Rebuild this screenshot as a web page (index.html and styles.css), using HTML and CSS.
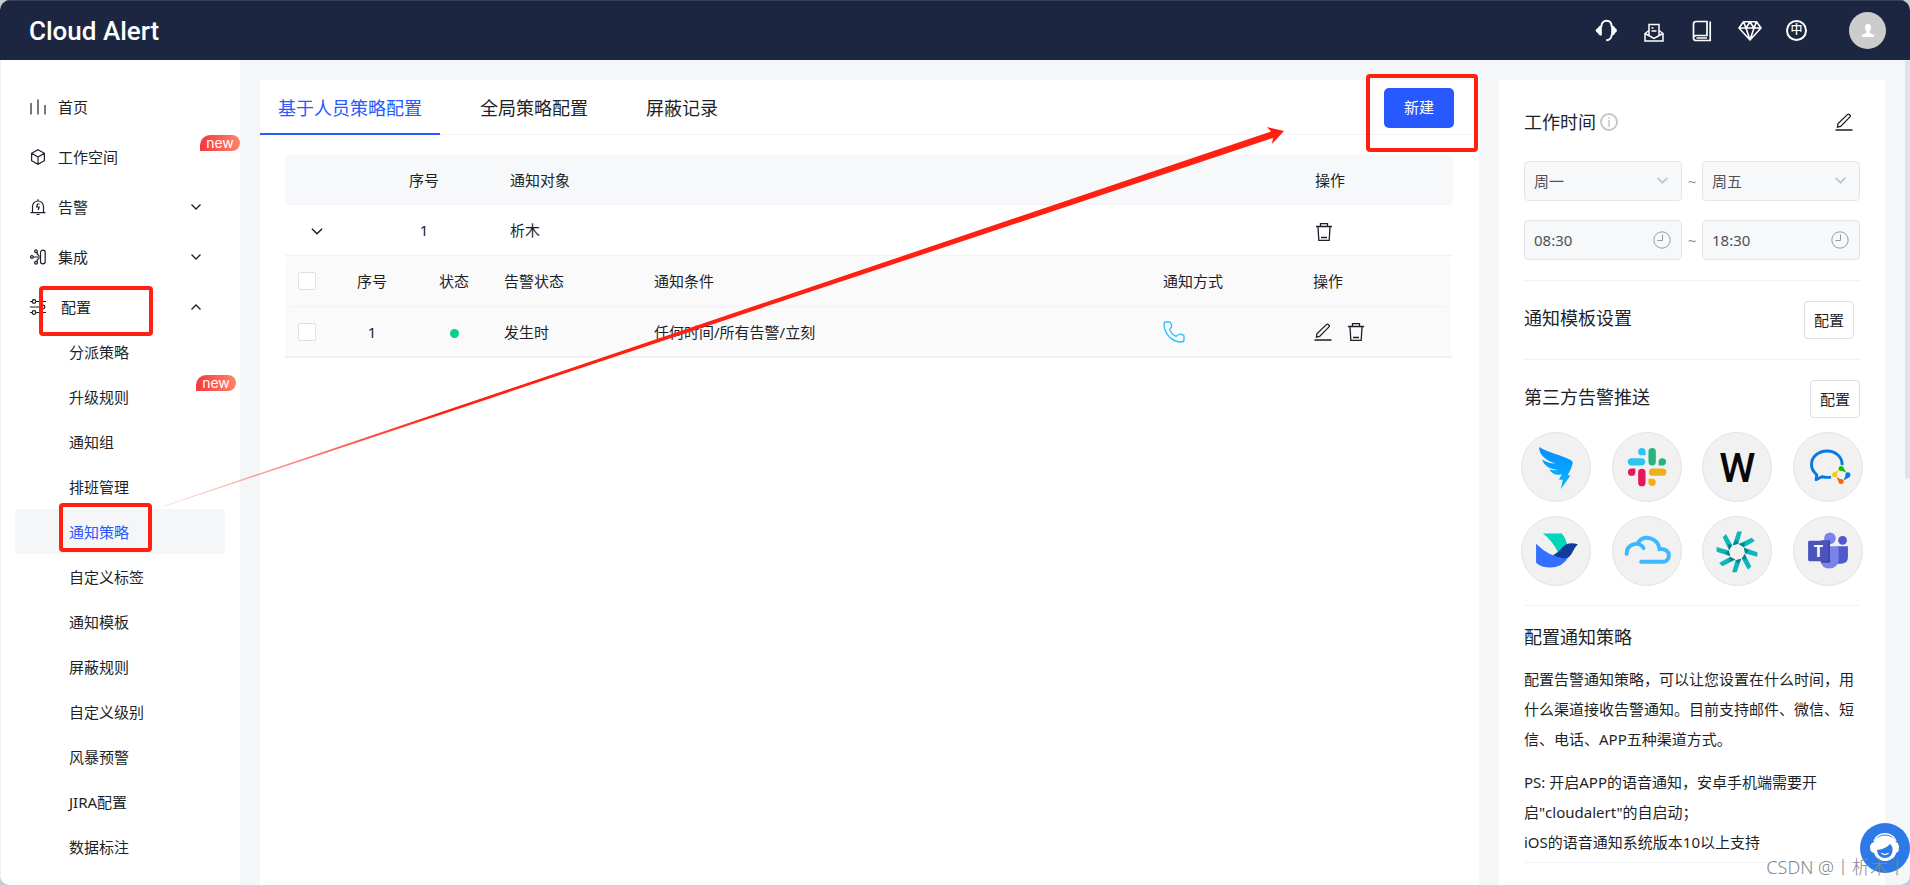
FILE: index.html
```html
<!DOCTYPE html>
<html lang="zh-CN">
<head>
<meta charset="utf-8">
<title>Cloud Alert</title>
<link rel="stylesheet" href="styles.css">
</head>
<body>
<svg width="0" height="0" class="defs" aria-hidden="true">
  <symbol id="trash" viewBox="0 0 18 20"><path d="M1 4.500h16M5.500 4V1.700h7V4M3 5l.8 13.300h10.400L15 5M6 15.500h6" /></symbol>
  <symbol id="edit" viewBox="0 0 18 18"><path d="M2.500 14.200l.4-3.400 9.700-9.400q.8-.7 1.600.1l.8.8q.8.8 0 1.600L5.600 13.400zM.5 17h17" /></symbol>
  <symbol id="down" viewBox="0 0 12 8"><path d="M1.500 1.500L6 6l4.500-4.500" /></symbol>
  <symbol id="clock" viewBox="0 0 18 18"><circle cx="9" cy="9" r="8.200" /><path d="M9.500 3.500V9.500H4.500" /></symbol>
</svg>
<div class="app">
  <header class="topbar">
    <h1 class="logo">Cloud Alert</h1>
    <nav class="tools" aria-label="工具">
      <a href="#" aria-label="客服"><svg viewBox="0 0 24 24"><path d="M7.300 8C7.300 4 9.500 1.800 12.500 1.800S17.700 4 17.700 8M17.700 15.500q-.2 5.500-5.500 5.800" fill="none" stroke="#fff" stroke-width="1.900"/><path d="M7.800 6.500v10C4.500 16.500 4 14.500 4 14 1 13 1 10 4 9 4.300 7.500 5.500 6.500 7.800 6.500zM17.200 6.500v10c2.800 0 3.800-1.500 3.800-2.500 2.500-1 2.500-4 0-5-.3-1.500-1.500-2.500-3.800-2.500z" fill="#fff"/></svg></a>
      <a href="#" aria-label="消息"><svg viewBox="0 0 24 24" fill="none" stroke="#fff" stroke-width="1.500"><path d="M7 16V5.500h10V16M7 11.500l-4 3v7.500h18v-7.500l-4-3M3 14.500l9 5 9-5M9.500 9h2M9.500 12h5"/></svg></a>
      <a href="#" aria-label="文档"><svg viewBox="0 0 24 24" fill="none" stroke="#fff" stroke-width="1.700"><path d="M3.500 18.500V5q0-2.500 2.500-2.500h11v14H6q-2.500 0-2.500 2.500t2.500 2.500h14.200V2.500M6.500 19H17"/></svg></a>
      <a href="#" aria-label="版本"><svg viewBox="0 0 24 24" fill="none" stroke="#fff" stroke-width="1.600" stroke-linejoin="round"><path d="M5.500 2.800h13L23 9 12 21 1 9zM1 9h22M5.500 2.800L8 9l4 12 4-12 2.500-6.200M8 9l4-6 4 6"/></svg></a>
      <a href="#" class="lang" aria-label="语言">中</a>
      <button class="avatar" aria-label="账户"><svg viewBox="0 0 14 14" fill="#fff"><path d="M7 0c2 0 3 1.500 3 3.500 0 1.700-.7 3-1.500 3.800v1.500L13 11v2H1v-2l4.500-2.200V7.300C4.700 6.500 4 5.200 4 3.500 4 1.500 5 0 7 0z"/></svg></button>
    </nav>
  </header>
  <div class="body">
    <aside class="side">
      <ul class="menu">
        <li><a href="#"><svg viewBox="0 0 16 16"><path d="M1 4v11.500M8 .5v15M15 6v9.500"/></svg>首页</a></li>
        <li><a href="#"><svg viewBox="0 0 16 16"><path d="M8 .8l6.400 3.500v7.400L8 15.200l-6.400-3.500V4.300zM1.600 4.300L8 8l6.400-3.700M8 8v7"/></svg>工作空间</a><span class="new">new</span></li>
        <li><a href="#"><svg viewBox="0 0 16 16"><path d="M2.500 13.500V7.500a5.500 5.500 0 0 1 11 0v6M.5 13.600h15M6.500 15.500h3M8 .2v2M9.500 5h-2L6.600 8h2.600l-1 3"/></svg>告警<svg class="chev" viewBox="0 0 12 8"><use href="#down"/></svg></a></li>
        <li><a href="#"><svg viewBox="0 0 16 16"><rect x="10.500" y="1.200" width="4.700" height="13.600" rx="2.300"/><circle cx="1.900" cy="8" r="1.400"/><circle cx="6" cy="2.300" r="1.400"/><circle cx="6" cy="13.700" r="1.400"/><path d="M3.300 8h7M7.200 3.200v2l2 1.500M7.200 12.800v-2l2-1.500"/></svg>集成<svg class="chev" viewBox="0 0 12 8"><use href="#down"/></svg></a></li>
        <li><a href="#" class="wide"><svg viewBox="0 0 16 16"><circle cx="4" cy="2.500" r="1.800"/><circle cx="13" cy="8" r="1.800"/><circle cx="4" cy="13.500" r="1.800"/><path d="M0 2.500h2M6 2.500h10M0 8h11M0 13.500h2M6 13.500h10"/></svg>配置<svg class="chev up" viewBox="0 0 12 8"><use href="#down"/></svg></a>
          <ul class="sub">
            <li><a href="#">分派策略</a></li>
            <li><a href="#">升级规则</a><span class="new">new</span></li>
            <li><a href="#">通知组</a></li>
            <li><a href="#">排班管理</a></li>
            <li><a href="#" class="current">通知策略</a></li>
            <li><a href="#">自定义标签</a></li>
            <li><a href="#">通知模板</a></li>
            <li><a href="#">屏蔽规则</a></li>
            <li><a href="#">自定义级别</a></li>
            <li><a href="#">风暴预警</a></li>
            <li><a href="#">JIRA配置</a></li>
            <li><a href="#">数据标注</a></li>
          </ul>
        </li>
      </ul>
    </aside>
    <main class="panel">
      <div class="tabs">
        <a href="#" class="tab on">基于人员策略配置</a>
        <a href="#" class="tab">全局策略配置</a>
        <a href="#" class="tab">屏蔽记录</a>
        <button class="create">新建</button>
      </div>
      <table class="grid">
        <colgroup><col class="c-open"><col class="c-num"><col><col class="c-act"></colgroup>
        <thead><tr><th></th><th class="mid">序号</th><th>通知对象</th><th>操作</th></tr></thead>
        <tbody>
          <tr><td class="mid"><button class="icon" aria-label="收起"><svg class="fold" viewBox="0 0 12 8"><use href="#down"/></svg></button></td><td class="mid">1</td><td>析木</td><td><button class="icon" aria-label="删除"><svg class="i-trash"><use href="#trash"/></svg></button></td></tr>
          <tr><td colspan="4" class="nest">
            <table class="grid inner">
              <colgroup><col class="n-check"><col class="n-num"><col class="n-state"><col class="n-alert"><col><col class="n-way"><col class="c-act"></colgroup>
              <thead><tr><th class="mid"><input type="checkbox" aria-label="全选"></th><th class="mid">序号</th><th class="mid">状态</th><th>告警状态</th><th>通知条件</th><th>通知方式</th><th>操作</th></tr></thead>
              <tbody><tr><td class="mid"><input type="checkbox" aria-label="选择 1"></td><td class="mid">1</td><td class="mid"><span class="dot"></span></td><td>发生时</td><td>任何时间/所有告警/立刻</td><td><svg class="phone" viewBox="0 0 22 22"><path d="M1 2.500Q1 1 3 1h3q1.500 0 2 1.500l.6 2.200Q9 6 7.700 6.800 6.500 8 7 9.500q1.500 3.500 5 5.300 1.500.6 2.500-.4 1.200-1.500 3-1.200l2 .5Q21 14 21 15.500v3q0 2.500-2.500 2.500C9 21 1 13 1 2.500z"/></svg></td><td><div class="acts"><button class="icon" aria-label="编辑"><svg class="i-edit"><use href="#edit"/></svg></button><button class="icon" aria-label="删除"><svg class="i-trash"><use href="#trash"/></svg></button></div></td></tr></tbody>
            </table>
          </td></tr>
        </tbody>
      </table>
    </main>
    <aside class="info">
      <section class="hours">
        <div class="head"><h2>工作时间</h2><span class="tip">i</span><button class="icon edit" aria-label="编辑工作时间"><svg class="i-edit"><use href="#edit"/></svg></button></div>
        <div class="range">
          <div class="field"><select aria-label="开始日"><option>周一</option></select><svg class="arrow" viewBox="0 0 12 8"><use href="#down"/></svg></div>
          <span>~</span>
          <div class="field"><select aria-label="结束日"><option>周五</option></select><svg class="arrow" viewBox="0 0 12 8"><use href="#down"/></svg></div>
        </div>
        <div class="range">
          <div class="field"><input type="text" value="08:30" aria-label="开始时间"><svg class="clock"><use href="#clock"/></svg></div>
          <span>~</span>
          <div class="field"><input type="text" value="18:30" aria-label="结束时间"><svg class="clock"><use href="#clock"/></svg></div>
        </div>
      </section>
      <section class="line template"><h2>通知模板设置</h2><button class="set">配置</button></section>
      <section class="push">
        <div class="line"><h2>第三方告警推送</h2><button class="set">配置</button></div>
        <div class="brands">
          <span><svg viewBox="0 0 70 70"><defs><linearGradient id="ding" x1="0" y1="0" x2="0" y2="1"><stop offset="0" stop-color="#078cff"/><stop offset="1" stop-color="#08b8ff"/></linearGradient></defs><path fill="url(#ding)" d="M17.500 14.500c10 6 22 8 32 13 3 1.500 3.200 3 2 6-1 4-3 7-4.500 10h3L40 58l2-10h-4l3-5.500c-6 1.500-9 0-13-5 4 1 6.500 1 9 .5-9-1-14-4-16.500-11 5 3.500 9 4 14 4.500C24 28 18 23 17.500 14.500z"/></svg></span>
          <span><svg viewBox="0 0 70 70" fill="none" stroke-width="7.600" stroke-linecap="round"><path stroke="#24b47e" d="M40.300 19.300v10.400"/><path stroke="#ecb216" d="M40.700 40.300h10.400"/><path stroke="#e3175a" d="M29.700 40.700v10.400"/><path stroke="#2bc4f3" d="M19 29.700h10.400"/><g stroke="none"><path fill="#24b47e" d="M47 33.500v-3.800a3.800 3.800 0 1 1 3.800 3.800z"/><path fill="#ecb216" d="M36.500 47h3.800a3.800 3.800 0 1 1-3.800 3.800z"/><path fill="#e3175a" d="M23 36.500v3.800a3.800 3.800 0 1 1-3.800-3.800z"/><path fill="#2bc4f3" d="M33.500 23h-3.800a3.800 3.800 0 1 1 3.800-3.800z"/></g></svg></span>
          <span class="w">W</span>
          <span><svg viewBox="0 0 70 70"><path fill="none" stroke="#0a78e4" stroke-width="3" stroke-linejoin="round" d="M49.500 33C50 24 42 18.500 34 18.500c-9 0-16 6-16 14 0 5 2.500 8 5.500 10.500L22.700 48l6-3q5 1.200 9.500.4"/><path fill="#24b80b" d="M45.800 37.500L54 41l-3.500-6z"/><path fill="#0a78e4" d="M54.500 40.500L51 49l6-3.500z"/><path fill="#ff6010" d="M51 49.500L43.500 45l3 6z"/><path fill="#ffc60b" d="M42 45.500L46.500 38l-6 3z"/><circle cx="48.500" cy="36.500" r="2.600" fill="#24b80b"/><circle cx="55.500" cy="43" r="2.600" fill="#0a78e4"/><circle cx="48.500" cy="50" r="2.600" fill="#ff6010"/><circle cx="41.800" cy="43" r="2.600" fill="#ffc60b"/></svg></span>
          <span><svg viewBox="0 0 70 70"><path fill="#00d6b9" d="M21.500 17H41q4 4.500 5.500 11l-9 9Q31 24 21.500 17z"/><path fill="#3370ff" d="M14.500 27.500Q28 41 43 42q3 0 5-1Q42 52 29.500 52 20 52 14.500 47z"/><path fill="#133c9a" d="M32 39.500Q37 37 42 31t15.500-3q-4 4-6 9c-4 8-12 6-19.500 2.500z"/></svg></span>
          <span><svg viewBox="0 0 70 70" fill="none" stroke="#3db8ff" stroke-width="4" stroke-linecap="round"><path d="M14 38c0-11 13-13.500 17.500-6"/><path d="M26 26c6-8 20-5 22 7 13-1 11 13 4 13H29"/></svg></span>
          <span><svg viewBox="0 0 70 70"><defs><g id="ray"><path fill="#0cb6bb" d="M35.300 15h4.700L36.500 27.500 30.500 29z"/><path fill="#087f85" d="M30.500 29l3.500-5.500 2.500 4z"/></g></defs><use href="#ray"/><use href="#ray" transform="rotate(45 35 36)"/><use href="#ray" transform="rotate(90 35 36)"/><use href="#ray" transform="rotate(135 35 36)"/><use href="#ray" transform="rotate(180 35 36)"/><use href="#ray" transform="rotate(225 35 36)"/><use href="#ray" transform="rotate(270 35 36)"/><use href="#ray" transform="rotate(315 35 36)"/></svg></span>
          <span><svg viewBox="0 0 70 70"><circle cx="50" cy="24" r="4.500" fill="#5059c9"/><path fill="#5059c9" d="M44 30h11.500v11q0 7-6.500 7h-5z"/><circle cx="37" cy="22" r="6" fill="#7b83eb"/><path fill="#7b83eb" d="M27 30h19v14q-1 9-10 9-7 0-9-8z"/><path fill="#3a429f" d="M28 24h9v23H28z"/><rect x="14.500" y="24.500" width="21" height="21" rx="1.500" fill="#4b53bc"/></svg><b>T</b></span>
        </div>
      </section>
      <section class="help">
        <h2>配置通知策略</h2>
        <p>配置告警通知策略，可以让您设置在什么时间，用什么渠道接收告警通知。目前支持邮件、微信、短信、电话、APP五种渠道方式。</p>
        <p>PS: 开启APP的语音通知，安卓手机端需要开启"cloudalert"的自启动；<br>iOS的语音通知系统版本10以上支持</p>
      </section>
    </aside>
  </div>
  <div class="thumb"></div>
  <button class="service" aria-label="在线客服"><svg viewBox="0 0 50 50"><path fill="none" stroke="#fff" stroke-width="1.500" d="M14 18a12 12 0 0 1 22 0"/><path fill="#fff" d="M14 19q3-6.500 11-6.500T36 19q3 1 3 5.500T36 30q-2 6-9 8h-4q-7-2-9-8-4-1-4-5.500t4-5.500z"/><path fill="#2d7ae6" d="M17 27q9-1 13-6 3 2 2.500 7-1 7-7.500 7-7 0-8-8z"/><path fill="none" stroke="#fff" stroke-width="1.500" stroke-linecap="round" d="M22 30.500q3 2 6 0M35 31q-2 5-9 5.500"/></svg></button>
  <svg class="marks" viewBox="0 0 1910 885" aria-hidden="true">
    <defs><linearGradient id="fade" gradientUnits="userSpaceOnUse" x1="158" y1="508" x2="440" y2="414"><stop offset="0" stop-color="#ff2012" stop-opacity=".1"/><stop offset="1" stop-color="#ff2012"/></linearGradient></defs>
    <path fill="url(#fade)" d="M163 506L1271 131.500 1267 127 1284 131 1272 144 1273 138 163 507z"/>
    <g fill="none" stroke="#ff2012" stroke-width="4"><rect x="41" y="288" width="110" height="46" rx="2"/><rect x="61" y="505" width="89" height="45" rx="2"/><rect x="1368" y="76" width="108" height="74" rx="2"/></g>
  </svg>
  <span class="watermark">CSDN @丨析木丨</span>
</div>
</body>
</html>
```
FILE: styles.css
```css
* { box-sizing: border-box; }
body {
  margin: 0;
  background: #c9cbd0;
  color: #1d1f29;
  font: 400 15px/30px "Noto Sans", "Noto Sans CJK SC", sans-serif;
}
ul { list-style: none; margin: 0; padding: 0; }
h1, h2, p { margin: 0; font-weight: inherit; }
a { color: inherit; text-decoration: none; }
button, input, select { font: inherit; color: inherit; }
button { cursor: pointer; padding: 0; }
.defs { position: absolute; }

.app {
  position: relative;
  display: flex;
  flex-direction: column;
  height: 100vh;
  overflow: hidden;
  border-radius: 10px;
  background: #f4f6f8;
}
.topbar {
  display: flex;
  align-items: center;
  justify-content: space-between;
  flex: none;
  height: 60px;
  padding: 0 24px 0 29px;
  background: #1d2640;
  border-top: 1px solid #36425a;
}
.logo { color: #fff; font: 500 26px/60px Roboto, sans-serif; }
.tools { display: flex; align-items: center; gap: 24px; }
.tools a, .tools a svg { display: block; width: 24px; height: 24px; }
.tools .lang {
  width: 21px;
  height: 21px;
  border: 2px solid #fff;
  border-radius: 50%;
  color: #fff;
  font-size: 12px;
  font-weight: 500;
  line-height: 16px;
  text-align: center;
}
.avatar {
  display: grid;
  place-items: center;
  width: 37px;
  height: 37px;
  margin-left: 18px;
  border: 0;
  border-radius: 50%;
  background: #ccc;
}
.avatar svg { width: 14px; height: 14px; }

.body { display: flex; gap: 20px; flex: 1; min-height: 0; padding-right: 25px; }
.side {
  flex: none;
  width: 240px;
  padding-top: 22px;
  background: #fff;
  border-left: 1px solid #eef0f3;
}
.menu li { position: relative; }
.menu a {
  display: flex;
  align-items: center;
  gap: 12px;
  height: 50px;
  padding: 0 38px 0 29px;
}
.menu a.wide { gap: 15px; }
.menu svg { width: 16px; height: 16px; fill: none; stroke: #1d1f29; stroke-width: 1.2; overflow: visible; }
.menu .chev { width: 12px; height: 8px; margin-left: auto; stroke-width: 1.3; }
.menu .up { transform: rotate(180deg); }
.menu .sub { margin-top: -3px; }
.menu .sub a { height: 45px; margin: 0 15px 0 14px; padding: 0 0 0 54px; border-radius: 4px; }
.menu .sub a.current { background: #f4f6f8; color: #2859ff; }
.new {
  position: absolute;
  top: 3px;
  right: 0;
  width: 40px;
  height: 16px;
  border-radius: 10px 8px 8px 0;
  background: linear-gradient(90deg, #f5383f, #ff8468);
  color: #fff;
  font: 400 14px/15px Inter, sans-serif;
  text-align: center;
}
.sub .new { top: 1px; right: 4px; }

.panel { flex: 1; min-width: 0; margin-top: 20px; background: #fff; }
.tabs {
  display: flex;
  gap: 22px;
  height: 55px;
  border-bottom: 1px solid #f2f3f6;
}
.tab { height: 55px; padding: 0 18px; font-size: 18px; line-height: 57px; }
.tab.on { color: #2859ff; border-bottom: 2px solid #2859ff; }
.create {
  width: 70px;
  height: 40px;
  margin: 8px 25px 0 auto;
  padding-bottom: 2px;
  border: 0;
  border-radius: 5px;
  background: #2859ff;
  color: #fff;
}
.grid { width: 100%; table-layout: fixed; border-collapse: separate; border-spacing: 0; }
.panel > .grid { width: auto; min-width: calc(100% - 51px); margin: 20px 26px 0 25px; }
.c-open { width: 64px; }
.c-num { width: 150px; }
.c-act { width: 149px; }
.n-check { width: 44px; }
.n-num { width: 86px; }
.n-state { width: 78px; }
.n-alert, .n-way { width: 150px; }
.grid th, .grid td {
  height: 50px;
  padding: 0 11px;
  border-bottom: 1px solid #f2f3f6;
  font-weight: inherit;
  text-align: left;
}
.grid tbody td { height: 51px; }
.grid th { background: #f7f8fa; }
.grid th:first-child { border-radius: 5px 0 0 5px; }
.grid th:last-child { border-radius: 0 5px 5px 0; }
.grid .mid { padding: 0; text-align: center; }
.grid .nest { padding: 0 2px 0 0; }
.grid .inner th, .grid .inner td { background: #fafafb; }
.grid .inner th { height: 51px; }
.grid .inner td { height: 50px; }
.inner input {
  appearance: none;
  display: block;
  width: 18px;
  height: 18px;
  margin: 0 auto;
  border: 1px solid #dfe0e8;
  border-radius: 2px;
  background: #fff;
}
.dot { display: inline-block; width: 9px; height: 9px; border-radius: 50%; background: #04d093; }
.icon { display: inline-grid; place-items: center; border: 0; background: none; vertical-align: middle; }
.icon svg { fill: none; stroke: #1d1f29; stroke-width: 1.3; }
.icon .fold { width: 14px; height: 9px; }
.i-trash { width: 18px; height: 20px; }
.i-edit { width: 18px; height: 18px; }
.acts { display: flex; align-items: center; gap: 15px; padding-left: 1px; }
.phone { display: block; width: 22px; height: 22px; fill: none; stroke: #34bfff; stroke-width: 1.4; }

.info { flex: none; width: 386px; margin-top: 20px; padding: 0 25px; background: #fff; }
.info h2 { font-size: 18px; line-height: 30px; }
.info section { border-bottom: 1px solid #f2f3f6; }
.hours { padding: 26px 0 20px; }
.head { display: flex; align-items: center; gap: 4px; height: 32px; }
.tip {
  width: 18px;
  height: 18px;
  border: 2px solid #c3c7d1;
  border-radius: 50%;
  color: #b4b8c4;
  font-size: 13px;
  line-height: 14px;
  text-align: center;
}
.edit { margin: 0 7px 0 auto; }
.range { display: flex; margin-top: 19px; color: #8f939e; }
.head + .range { margin-top: 23px; }
.range span { width: 20px; line-height: 40px; text-align: center; }
.field { position: relative; flex: 1; min-width: 0; }
.field select, .field input {
  appearance: none;
  display: block;
  width: 100%;
  height: 40px;
  padding: 0 9px;
  border: 1px solid #e4e6eb;
  border-radius: 4px;
  background: #f7f8fa;
  color: #4f5158;
}
.field svg { position: absolute; pointer-events: none; fill: none; }
.field .arrow { top: 15px; right: 13px; width: 13px; height: 9px; stroke: #c3c5cb; stroke-width: 1.6; }
.field .clock { top: 11px; right: 11px; width: 18px; height: 18px; stroke: #9499a8; stroke-width: 1; }
.line { display: flex; align-items: flex-start; justify-content: space-between; }
.set {
  width: 50px;
  height: 38px;
  border: 1px solid #dcdee8;
  border-radius: 4px;
  background: #fff;
}
.template { padding: 20px 6px 20px 0; }
.template h2, .push h2 { line-height: 34px; }
.push { padding: 20px 0 19px; }
.brands {
  display: grid;
  grid-template-columns: repeat(4, 70px);
  justify-content: space-between;
  gap: 14px 0;
  margin: 14px -3px 0;
}
.brands span {
  position: relative;
  height: 70px;
  border: 1px solid #e3e3e3;
  border-radius: 50%;
  background: #f1f1f1;
}
.brands svg { display: block; width: 100%; height: 100%; }
.brands .w { color: #080808; font: 500 41px/70px Roboto, sans-serif; text-align: center; }
.brands b {
  position: absolute;
  top: 24px;
  left: 14px;
  width: 21px;
  color: #fff;
  font: 700 16px/21px "Noto Sans", sans-serif;
  text-align: center;
}
.help { padding: 16px 0 5px; }
.help p { margin: 13px 0 0; }
.help h2 + p { margin-top: 12px; }

.thumb {
  position: absolute;
  top: 60px;
  right: 0;
  width: 5px;
  height: 419px;
  border-radius: 3px;
  background: #dfe2eb;
}
.service {
  position: absolute;
  right: 0;
  bottom: 12px;
  width: 50px;
  height: 50px;
  border: 0;
  border-radius: 50%;
  background: #2d7ae6;
}
.service svg { display: block; }
.marks { position: absolute; top: 0; left: 0; width: 1910px; height: 885px; pointer-events: none; }
.watermark {
  position: absolute;
  right: 4px;
  bottom: 3px;
  color: #85878c;
  font-size: 18px;
  font-weight: 300;
  white-space: nowrap;
}
```
